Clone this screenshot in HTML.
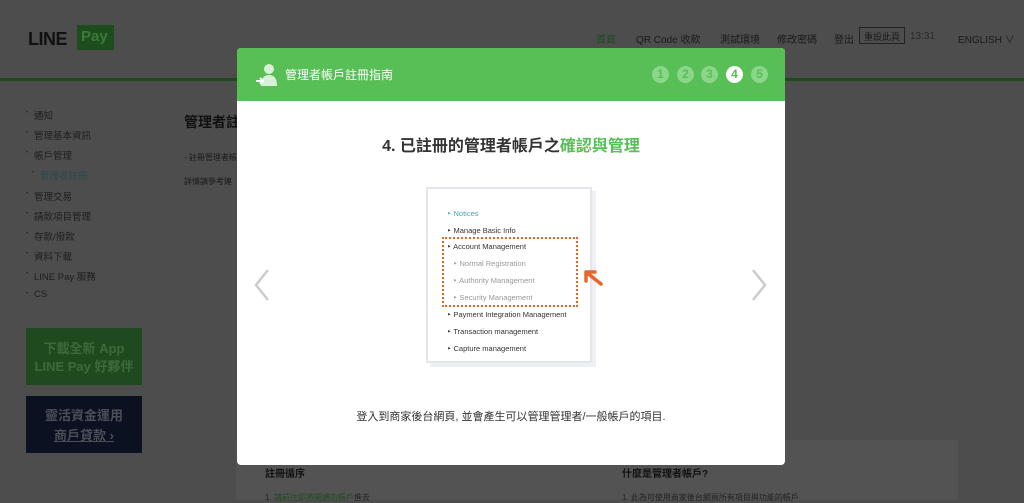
<!DOCTYPE html>
<html><head><meta charset="utf-8"><style>
*{margin:0;padding:0;box-sizing:border-box}
body{width:1024px;height:500px;overflow:hidden;background:#4d4d4d;font-family:"Liberation Sans","Noto Sans CJK TC",sans-serif;position:relative;color:#1a1a1a}
.a{position:absolute}
.gl{left:0;top:78px;width:1024px;height:3px;background:#1f4a1e}
.nav{top:31px;font-size:10px;color:#1a1a1a;white-space:nowrap}
.sb{font-size:9.5px;color:#1e1e1e;left:34px}
.sb:before{content:"•";position:absolute;left:-8px;font-size:6px;top:2px;color:#2a2a2a}
.modal{left:237px;top:48px;width:548px;height:417px;background:#fff;border-radius:4px;overflow:hidden}
.hd{height:53px;background:#57bf55;position:relative}
.num{position:absolute;top:18px;width:17px;height:17px;border-radius:50%;background:#8cd68a;color:#57bf55;font-size:12px;text-align:center;line-height:17px;font-weight:bold}
</style></head><body>
<div class="a gl"></div>
<div class="a" style="left:28px;top:29px;font-size:18px;font-weight:bold;color:#111;letter-spacing:-0.5px">LINE</div>
<div class="a" style="left:77px;top:25px;width:37px;height:25px;background:#1d4d1c;color:#3b7a39;font-size:15px;font-weight:bold;padding:3px 4px">Pay</div>
<div class="a nav" style="left:596px;color:#1d4d1c">首頁</div>
<div class="a nav" style="left:636px">QR Code 收款</div>
<div class="a nav" style="left:720px">測試環境</div>
<div class="a nav" style="left:777px">修改密碼</div>
<div class="a nav" style="left:834px">登出</div>
<div class="a" style="left:859px;top:27px;width:46px;height:17px;border:1px solid #222;font-size:9px;padding:2px 4px">重設此頁</div>
<div class="a nav" style="left:910px;color:#2a2a2a">13:31</div>
<div class="a nav" style="left:958px">ENGLISH ∨</div>

<div class="a sb" style="top:108px">通知</div>
<div class="a sb" style="top:128px">管理基本資訊</div>
<div class="a sb" style="top:148px">帳戶管理</div>
<div class="a sb" style="top:168px;left:40px;color:#2a4a4a">管理者註冊</div>
<div class="a sb" style="top:189px">管理交易</div>
<div class="a sb" style="top:209px">請款項目管理</div>
<div class="a sb" style="top:229px">存款/撥款</div>
<div class="a sb" style="top:249px">資料下載</div>
<div class="a sb" style="top:269px">LINE Pay 服務</div>
<div class="a sb" style="top:289px">CS</div>
<div class="a" style="left:26px;top:328px;width:116px;height:57px;background:#1f4a1f;color:#3d6a3c;font-size:13px;font-weight:bold;text-align:center;padding-top:12px;line-height:18px">下載全新 App<br>LINE Pay 好夥伴</div>
<div class="a" style="left:26px;top:396px;width:116px;height:57px;background:#0b1120;color:#4a4e58;font-size:13px;font-weight:bold;text-align:center;padding-top:10px;line-height:20px">靈活資金運用<br><u>商戶貸款 ›</u></div>
<div class="a" style="left:184px;top:112px;font-size:14px;font-weight:bold;color:#111">管理者註</div>
<div class="a" style="left:184px;top:152px;font-size:8px;color:#1a1a1a">- 註冊管理者帳</div>
<div class="a" style="left:184px;top:176px;font-size:8px;color:#1a1a1a">詳情請參考連</div>

<div class="a" style="left:236px;top:440px;width:722px;height:60px;background:#535353"></div>
<div class="a" style="left:265px;top:465px;font-size:10px;font-weight:bold;color:#111">註冊循序</div>
<div class="a" style="left:622px;top:465px;font-size:10px;font-weight:bold;color:#111">什麼是管理者帳戶?</div>
<div class="a" style="left:265px;top:492px;font-size:8px;color:#222">1. <span style="color:#1f4a1f">請前往即將開通的帳戶</span>進去</div>
<div class="a" style="left:622px;top:492px;font-size:8px;color:#222">1. 此為可使用商家後台網頁所有項目與功能的帳戶</div>

<div class="a modal">
 <div class="hd">
  <svg class="a" style="left:17px;top:14px" width="26" height="26" viewBox="0 0 26 26"><circle cx="15" cy="7" r="5" fill="#d8f0d6"/><path d="M7 24 Q7 13 15 13 Q23 13 23 24Z" fill="#d8f0d6"/><path d="M2 19h7M6 16l3 3-3 3" stroke="#fff" stroke-width="2" fill="none"/></svg>
  <div class="a" style="left:48px;top:18px;color:#fff;font-size:12px">管理者帳戶註冊指南</div>
  <div class="num" style="left:415px">1</div>
  <div class="num" style="left:440px">2</div>
  <div class="num" style="left:464px">3</div>
  <div class="num" style="left:489px;background:#fff;color:#57bf55">4</div>
  <div class="num" style="left:514px">5</div>
 </div>
 <div class="a" style="left:0;width:548px;top:84px;text-align:center;font-size:16px;font-weight:bold;color:#333">4. 已註冊的管理者帳戶之<span style="color:#57bf55">確認與管理</span></div>
 <div class="a" style="left:189px;top:139px;width:166px;height:176px;border:2px solid #e4e6ec;box-shadow:4px 4px 0 #eef0f3;background:#fff;font-size:7.5px;color:#333">
  <div class="a" style="left:19px;top:20px;color:#4aa4a8">‣ Notices</div>
  <div class="a" style="left:19px;top:37px">‣ Manage Basic Info</div>
  <div class="a" style="left:19px;top:53px">‣ Account Management</div>
  <div class="a" style="left:25px;top:70px;color:#999">‣ Normal Registration</div>
  <div class="a" style="left:25px;top:87px;color:#999">‣ Authority Management</div>
  <div class="a" style="left:25px;top:104px;color:#999">‣ Security Management</div>
  <div class="a" style="left:19px;top:121px">‣ Payment Integration Management</div>
  <div class="a" style="left:19px;top:138px">‣ Transaction management</div>
  <div class="a" style="left:19px;top:155px">‣ Capture management</div>
  <div class="a" style="left:14px;top:48px;width:136px;height:70px;border:2px dotted #e8652a"></div>
 </div>
 <svg class="a" style="left:344px;top:218px" width="24" height="22" viewBox="0 0 24 22"><path d="M20 18L5 6M5 6v9M5 6h9" stroke="#e8652a" stroke-width="3.5" fill="none" stroke-linecap="round"/></svg>
 <svg class="a" style="left:16px;top:220px" width="18" height="34"><path d="M15 2L3 17l12 15" stroke="#ccc" stroke-width="2.5" fill="none"/></svg>
 <svg class="a" style="left:513px;top:220px" width="18" height="34"><path d="M3 2l12 15L3 32" stroke="#ccc" stroke-width="2.5" fill="none"/></svg>
 <div class="a" style="left:0;width:548px;top:360px;text-align:center;font-size:11px;color:#333">登入到商家後台網頁, 並會產生可以管理管理者/一般帳戶的項目.</div>
</div>
</body></html>
